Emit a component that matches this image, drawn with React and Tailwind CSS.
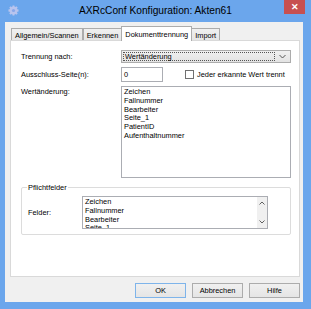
import React from 'react';

const font = { fontFamily: '"Liberation Sans", Arial, sans-serif' };

const Tab = ({ label, active }) => (
  <div
    className={`px-[3px] border border-[#acacac] border-b-0 leading-[11px] text-[7.4px] text-black ${
      active
        ? 'bg-white h-[15px] pt-[2px] -mx-[1px] relative z-10 -mb-[1px]'
        : 'bg-gradient-to-b from-[#f0f0f0] to-[#e5e5e5] h-[12px] pt-[1px]'
    }`}
  >
    {label}
  </div>
);

const ListBox = ({ items, className }) => (
  <div className={`bg-white border border-[#abadb3] text-[7.4px] leading-[8.8px] text-black pl-[2px] pt-[1px] overflow-hidden ${className}`}>
    {items.map((it) => (
      <div key={it}>{it}</div>
    ))}
  </div>
);

const Button = ({ label, primary }) => (
  <div
    className={`w-[51px] h-[15px] flex items-center justify-center text-[7.4px] text-black bg-gradient-to-b from-[#f0f0f0] to-[#e5e5e5] border ${
      primary ? 'border-[#7eb4ea]' : 'border-[#acacac]'
    }`}
  >
    {label}
  </div>
);

const Gear = () => (
  <svg width="11" height="11" viewBox="0 0 24 24">
    <g fill="#b8c4ee">
      {[0, 45, 90, 135].map((r) => (
        <rect key={r} x="9.5" y="1" width="5" height="22" rx="1" transform={`rotate(${r} 12 12)`} />
      ))}
      <circle cx="12" cy="12" r="8" />
    </g>
    <circle cx="12" cy="12" r="3.5" fill="#8aa8e8" />
  </svg>
);

export default function App() {
  const fields = ['Zeichen', 'Fallnummer', 'Bearbeiter', 'Seite_1', 'PatientID', 'Aufenthaltnummer'];

  return (
    <div style={font} className="w-[311px] h-[309px] bg-[#6ba6ec] flex flex-col overflow-hidden">
      {/* Title bar */}
      <div className="h-[22px] relative flex items-center justify-center shrink-0">
        <div className="absolute left-[8px] top-[5px]">
          <Gear />
        </div>
        <span className="text-[10.2px] text-black">AXRcConf Konfiguration: Akten61</span>
        <div className="absolute right-[6px] top-0 w-[21px] h-[14px] bg-[#c75050] flex items-center justify-center">
          <span className="text-white text-[9px] font-bold leading-none">✕</span>
        </div>
      </div>

      {/* Window body */}
      <div className="ml-[5px] w-[298px] h-[280px] bg-[#f0f0f0] flex flex-col">
        {/* Tabs */}
        <div className="h-[18px] flex items-end pl-[6px] shrink-0">
          <Tab label="Allgemein/Scannen" />
          <Tab label="Erkennen" />
          <Tab label="Dokumenttrennung" active />
          <Tab label="Import" />
        </div>

        {/* Tab panel */}
        <div className="ml-[5px] mr-[3px] h-[237px] bg-white border border-[#d9d9d9] text-[7.4px] text-black pt-[9px] pl-[10px] pr-[8px]">
          <div className="grid grid-cols-[100px_1fr] gap-y-[4px]">
            <div className="flex items-center">Trennung nach:</div>
            <div className="h-[13px] border border-[#acacac] bg-gradient-to-b from-[#f0f0f0] to-[#e3e3e3] flex items-center pl-[1px] pr-[4px]">
              <div className="flex-1 h-[9px] border border-dotted border-[#555] flex items-center pl-[1px] leading-none">
                Wertänderung
              </div>
              <svg width="7" height="5" viewBox="0 0 7 5" className="ml-[4px]">
                <path d="M0.5 1 L3.5 4 L6.5 1" stroke="#555" strokeWidth="1" fill="none" />
              </svg>
            </div>

            <div className="flex items-center">Ausschluss-Seite(n):</div>
            <div className="flex items-center">
              <div className="w-[42px] h-[15px] border border-[#abadb3] bg-white flex items-center pl-[2px]">0</div>
              <div className="ml-[22px] w-[9px] h-[9px] border border-[#707070] bg-white" />
              <span className="ml-[3px]">Jeder erkannte Wert trennt</span>
            </div>

            <div className="pt-[1px] leading-[9px]">Wertänderung:</div>
            <ListBox items={fields} className="h-[92px]" />
          </div>

          {/* Pflichtfelder group */}
          <div className="mt-[9px] border border-[#dcdcdc] rounded-[2px] h-[48px] relative pl-[6px] pr-[22px] pt-[8px]">
            <span className="absolute -top-[5px] left-[5px] bg-white px-[1px] leading-[9px]">Pflichtfelder</span>
            <div className="flex items-center">
              <span className="w-[54px]">Felder:</span>
              <div className="flex-1 h-[33px] border border-[#abadb3] bg-white flex overflow-hidden">
                <div className="flex-1 text-[7.4px] leading-[8.8px] pl-[2px] pt-[1px]">
                  {fields.slice(0, 4).map((f) => (
                    <div key={f}>{f}</div>
                  ))}
                </div>
                <div className="w-[10px] bg-[#f0f0f0] flex flex-col items-center justify-between py-[4px]">
                  <svg width="6" height="4" viewBox="0 0 6 4">
                    <path d="M0.5 3.5 L3 1 L5.5 3.5" stroke="#606060" strokeWidth="1" fill="none" />
                  </svg>
                  <svg width="6" height="4" viewBox="0 0 6 4">
                    <path d="M0.5 0.5 L3 3 L5.5 0.5" stroke="#606060" strokeWidth="1" fill="none" />
                  </svg>
                </div>
              </div>
            </div>
          </div>
        </div>

        {/* Buttons */}
        <div className="flex justify-end gap-[6px] mt-[6px] mr-[3px]">
          <Button label="OK" primary />
          <Button label="Abbrechen" />
          <Button label="Hilfe" />
        </div>
      </div>
    </div>
  );
}
